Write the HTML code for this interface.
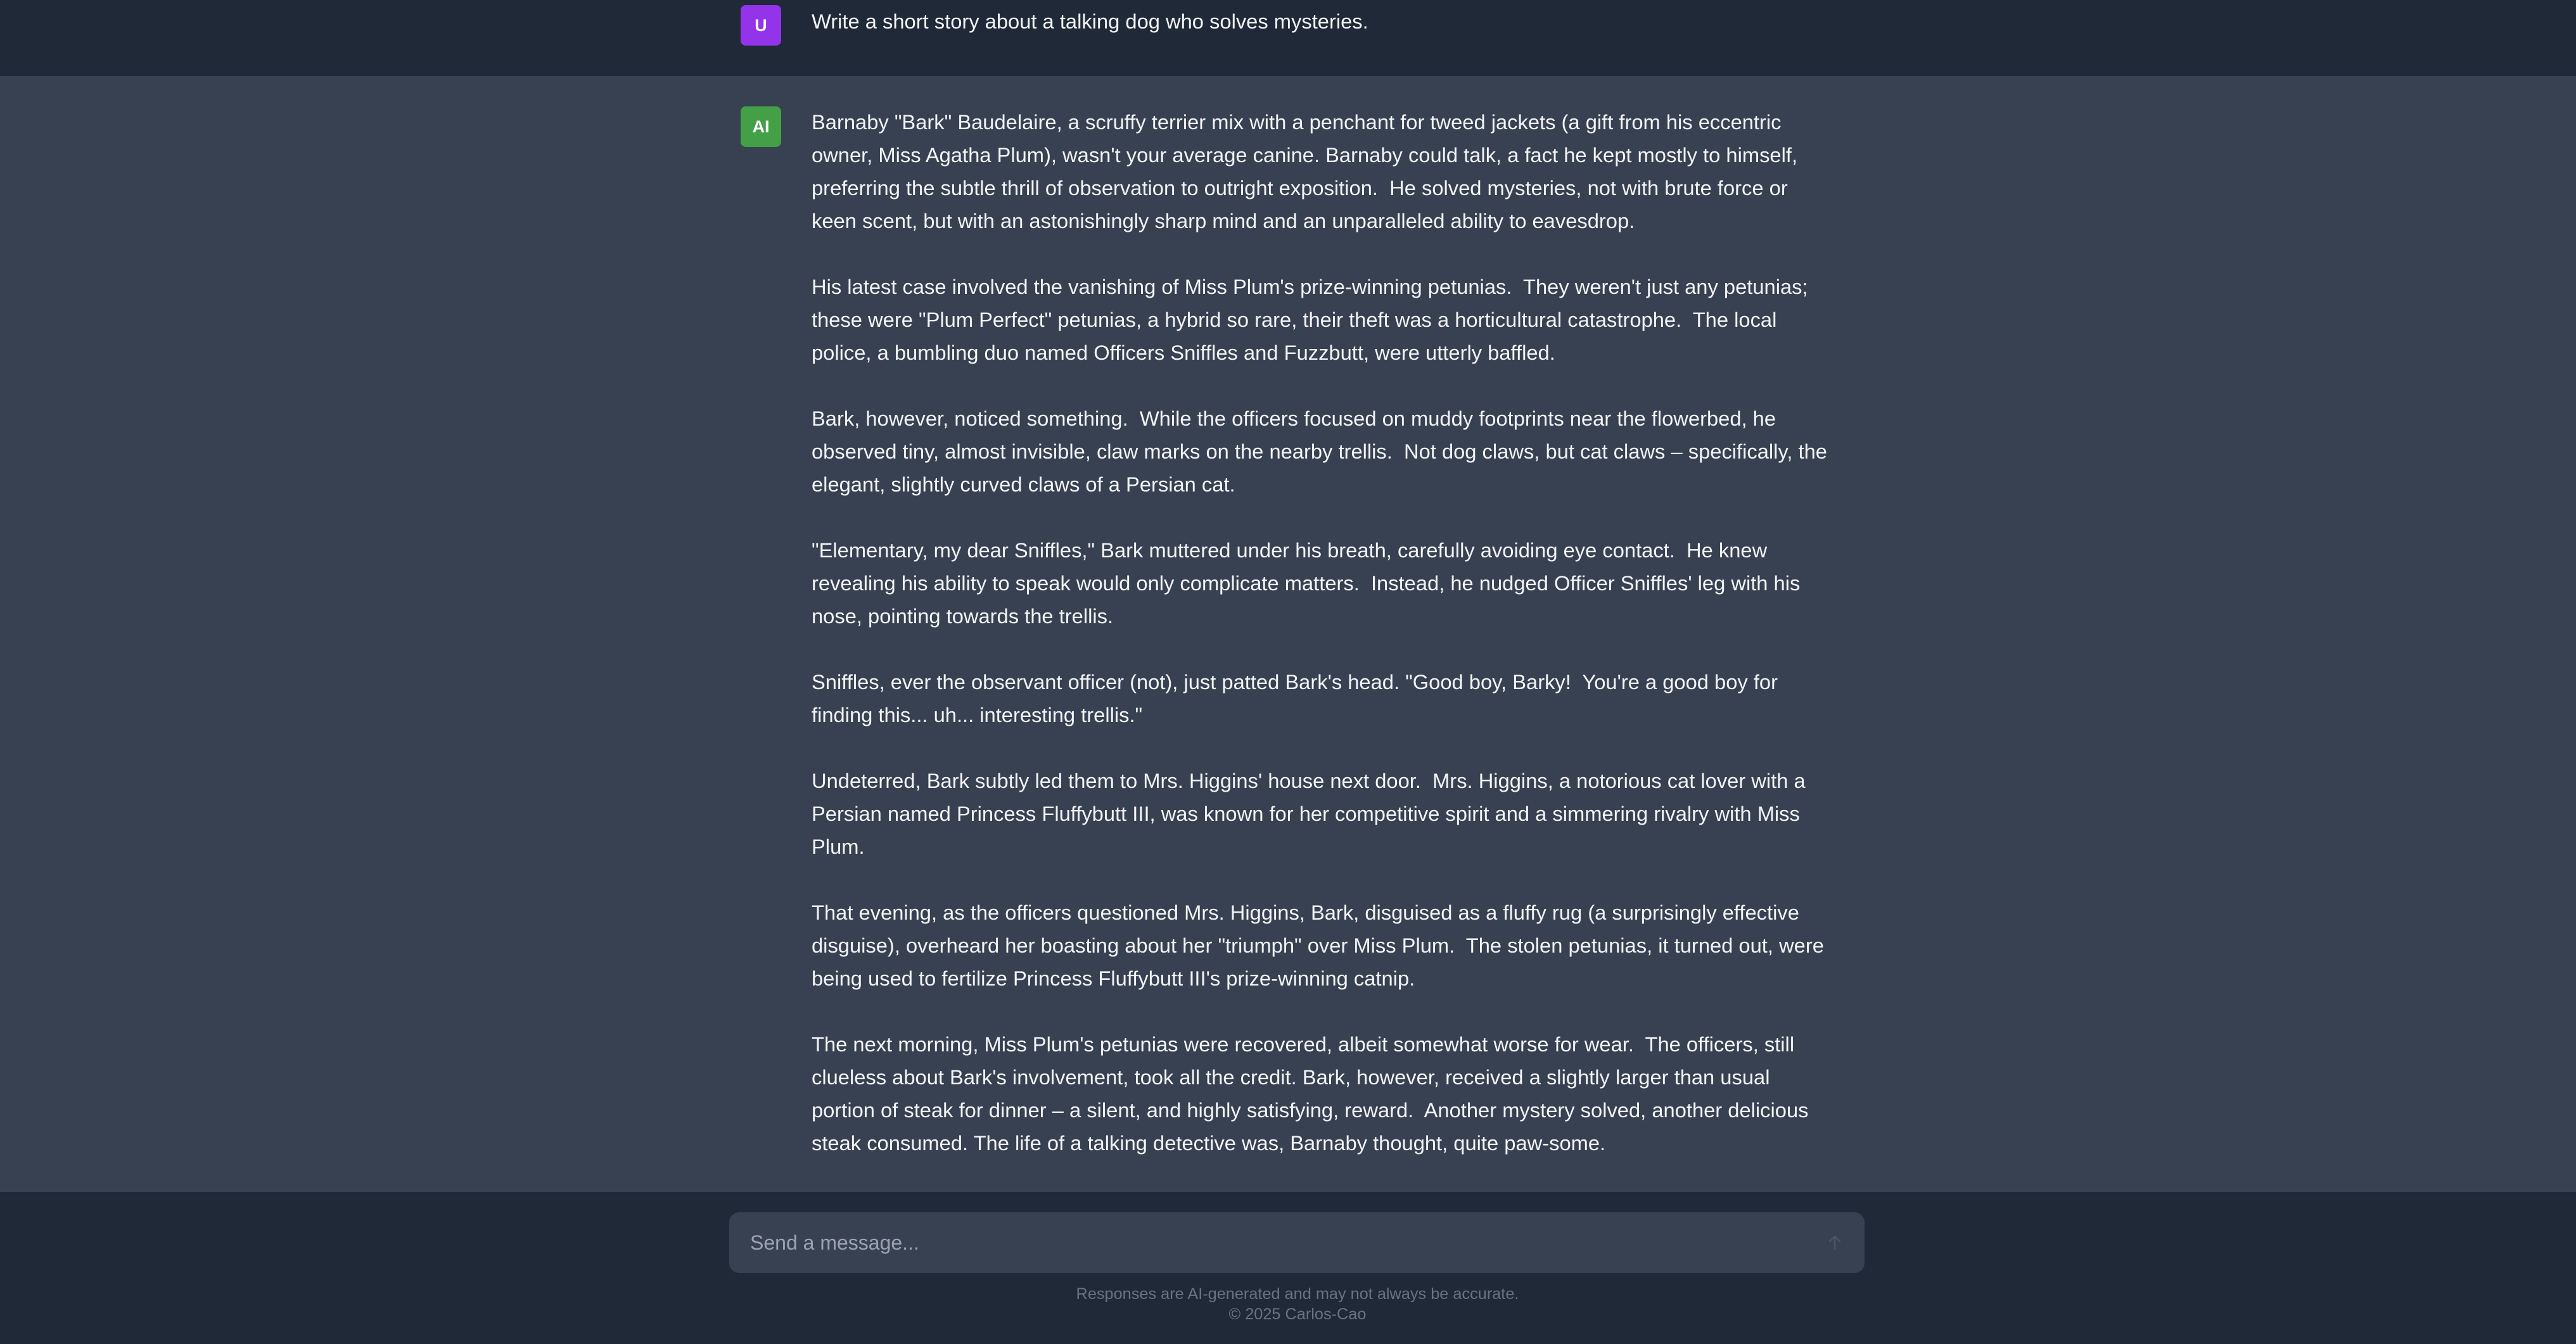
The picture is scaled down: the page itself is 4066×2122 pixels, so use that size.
<!DOCTYPE html>
<html><head><meta charset="utf-8"><style>
html,body{margin:0;padding:0;}
body{width:4066px;height:2122px;background:#1f2937;font-family:"Liberation Sans",sans-serif;position:relative;overflow:hidden;color:#f3f4f6;}
.user{position:absolute;left:0;top:0;width:4066px;height:120px;background:#1f2937;}
.ai{position:absolute;left:0;top:120px;width:4066px;height:1762px;background:#374151;}
.av{position:absolute;left:1169px;width:64px;height:64px;border-radius:8px;color:#fff;font-size:27px;font-weight:bold;display:flex;align-items:center;justify-content:center;}
.txt{position:absolute;left:1281px;font-size:32.7px;line-height:52px;white-space:nowrap;}
.txt p{margin:0 0 52px 0;}
.input{position:absolute;left:1151px;top:1914px;width:1792px;height:96px;background:#374151;border-radius:16px;}
.ph{position:absolute;left:33px;top:0;line-height:96px;font-size:32px;color:#9ca3af;}
.foot{position:absolute;left:0;width:4096px;text-align:center;font-size:25.3px;color:#6b7280;}
</style></head><body>
<div class="user">
<div class="av" style="top:8px;background:#9333ea;">U</div>
<div class="txt" style="top:8px;">Write a short story about a talking dog who solves mysteries.</div>
</div>
<div class="ai">
<div class="av" style="top:48px;background:#43a047;">AI</div>
<div class="txt" style="top:47px;">
<p>Barnaby "Bark" Baudelaire, a scruffy terrier mix with a penchant for tweed jackets (a gift from his eccentric<br>owner, Miss Agatha Plum), wasn't your average canine. Barnaby could talk, a fact he kept mostly to himself,<br>preferring the subtle thrill of observation to outright exposition.&nbsp; He solved mysteries, not with brute force or<br>keen scent, but with an astonishingly sharp mind and an unparalleled ability to eavesdrop.</p>
<p>His latest case involved the vanishing of Miss Plum's prize-winning petunias.&nbsp; They weren't just any petunias;<br>these were "Plum Perfect" petunias, a hybrid so rare, their theft was a horticultural catastrophe.&nbsp; The local<br>police, a bumbling duo named Officers Sniffles and Fuzzbutt, were utterly baffled.</p>
<p>Bark, however, noticed something.&nbsp; While the officers focused on muddy footprints near the flowerbed, he<br>observed tiny, almost invisible, claw marks on the nearby trellis.&nbsp; Not dog claws, but cat claws – specifically, the<br>elegant, slightly curved claws of a Persian cat.</p>
<p>"Elementary, my dear Sniffles," Bark muttered under his breath, carefully avoiding eye contact.&nbsp; He knew<br>revealing his ability to speak would only complicate matters.&nbsp; Instead, he nudged Officer Sniffles' leg with his<br>nose, pointing towards the trellis.</p>
<p>Sniffles, ever the observant officer (not), just patted Bark's head. "Good boy, Barky!&nbsp; You're a good boy for<br>finding this... uh... interesting trellis."</p>
<p>Undeterred, Bark subtly led them to Mrs. Higgins' house next door.&nbsp; Mrs. Higgins, a notorious cat lover with a<br>Persian named Princess Fluffybutt III, was known for her competitive spirit and a simmering rivalry with Miss<br>Plum.</p>
<p>That evening, as the officers questioned Mrs. Higgins, Bark, disguised as a fluffy rug (a surprisingly effective<br>disguise), overheard her boasting about her "triumph" over Miss Plum.&nbsp; The stolen petunias, it turned out, were<br>being used to fertilize Princess Fluffybutt III's prize-winning catnip.</p>
<p>The next morning, Miss Plum's petunias were recovered, albeit somewhat worse for wear.&nbsp; The officers, still<br>clueless about Bark's involvement, took all the credit. Bark, however, received a slightly larger than usual<br>portion of steak for dinner – a silent, and highly satisfying, reward.&nbsp; Another mystery solved, another delicious<br>steak consumed. The life of a talking detective was, Barnaby thought, quite paw-some.</p>
</div>
</div>
<div class="input"><div class="ph">Send a message...</div>
<svg style="position:absolute;left:1730px;top:36px" width="30" height="24" viewBox="0 0 30 24"><path d="M15 22V3M7 10l8-8 8 8" stroke="#4b5563" stroke-width="2.5" fill="none" stroke-linecap="round" stroke-linejoin="round"/></svg>
</div>
<div class="foot" style="top:2029px;">Responses are AI-generated and may not always be accurate.</div>
<div class="foot" style="top:2061px;">© 2025 Carlos-Cao</div>
</body></html>
